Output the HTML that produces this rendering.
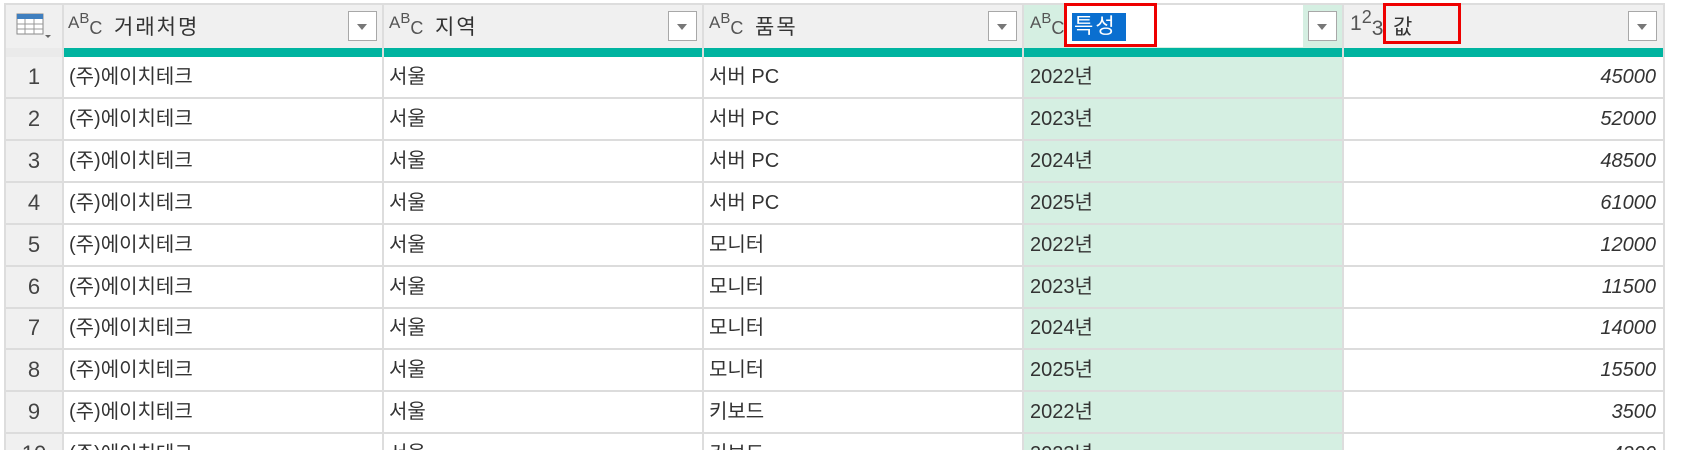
<!DOCTYPE html>
<html><head><meta charset="utf-8"><style>
html,body{margin:0;width:1684px;height:450px;overflow:hidden}
body{background:#fff;font-family:"Liberation Sans","Noto Sans CJK KR",sans-serif;color:#333}
#w{position:relative;width:1684px;height:450px;overflow:hidden}
.a{position:absolute}
.hdr{top:5px;height:43px;background:#f0f0f0}
.dd{position:absolute;top:11px;width:29px;height:30px;border:1.5px solid #a8a8a8;background:#fff;box-sizing:border-box}
.dd:after{content:"";position:absolute;left:8px;top:12px;border-left:5px solid transparent;border-right:5px solid transparent;border-top:6px solid #777}
.abc{position:absolute;top:12px;font-size:17px;color:#555;line-height:20px}
.abc sup{font-size:15px;position:relative;top:-5px;vertical-align:baseline}
.abc sub{font-size:18px;position:relative;top:6px;vertical-align:baseline}
.ht{position:absolute;top:11px;font-size:21px;color:#333;letter-spacing:2px}
.cell{position:absolute;font-size:20px;height:40px;line-height:40px}
</style></head><body><div id="w">
<div class="a hdr" style="left:5px;width:1659px"></div>
<div class="a" style="left:5px;top:3px;width:1659px;height:2px;background:#ddd"></div>
<div class="a" style="left:1024px;top:5px;width:319px;height:43px;background:#d5efe2"></div>
<div class="a" style="left:1064px;top:5px;width:239px;height:42px;background:#fff"></div>
<div class="a" style="left:63px;top:48px;width:1601px;height:9px;background:#00b4a0"></div>
<div class="a" style="left:5px;top:48px;width:58px;height:9px;background:#eaeaea"></div>
<div class="a" style="left:5px;top:57px;width:58px;height:393px;background:#f0f0f0"></div>
<div class="a" style="left:1024px;top:57px;width:319px;height:393px;background:#d5efe2"></div>
<div id="rows"></div>
<div class="a" style="left:4px;top:3px;width:2px;height:447px;background:#ddd"></div>
<div class="a" style="left:62px;top:3px;width:2px;height:447px;background:#ddd"></div>
<div class="a" style="left:382px;top:3px;width:2px;height:447px;background:#ddd"></div>
<div class="a" style="left:702px;top:3px;width:2px;height:447px;background:#ddd"></div>
<div class="a" style="left:1022px;top:3px;width:2px;height:447px;background:#ddd"></div>
<div class="a" style="left:1342px;top:3px;width:2px;height:447px;background:#ddd"></div>
<div class="a" style="left:1663px;top:3px;width:2px;height:447px;background:#ddd"></div>
<svg class="a" style="left:16px;top:13px" width="40" height="28"><rect x="1" y="1" width="26" height="20" fill="#fff" stroke="#888"/><rect x="1" y="1" width="26" height="5" fill="#3f7fbf"/><path d="M1 11H27M1 16H27M9 6V21M18 6V21" stroke="#999"/><path d="M29 22l3 3 3-3z" fill="#666"/></svg>
<div class="abc" style="left:68px">A<sup>B</sup><sub>C</sub></div><div class="ht" style="left:114px">거래처명</div><div class="dd" style="left:348px"></div>
<div class="abc" style="left:389px">A<sup>B</sup><sub>C</sub></div><div class="ht" style="left:435px">지역</div><div class="dd" style="left:668px"></div>
<div class="abc" style="left:709px">A<sup>B</sup><sub>C</sub></div><div class="ht" style="left:755px">품목</div><div class="dd" style="left:988px"></div>
<div class="abc" style="left:1030px">A<sup>B</sup><sub>C</sub></div>
<div class="a" style="left:1072px;top:13px;width:54px;height:28px;background:#0a6fd0"></div>
<div class="ht" style="left:1074px;top:10px;color:#fff">특성</div>
<div class="dd" style="left:1308px"></div>
<div class="a" style="left:1064px;top:3px;width:93px;height:44px;border:3px solid #e00;box-sizing:border-box"></div>
<div class="a" style="left:1350px;top:12px;font-size:21px;color:#555">1<span style="position:relative;top:-7px;font-size:18px">2</span><span style="position:relative;top:5px">3</span></div>
<div class="ht" style="left:1393px">값</div>
<div class="a" style="left:1383px;top:3px;width:78px;height:41px;border:3px solid #e00;box-sizing:border-box"></div>
<div class="dd" style="left:1628px"></div>
</div>
<script>
var d=[["서버 PC","2022년",45000],["서버 PC","2023년",52000],["서버 PC","2024년",48500],["서버 PC","2025년",61000],["모니터","2022년",12000],["모니터","2023년",11500],["모니터","2024년",14000],["모니터","2025년",15500],["키보드","2022년",3500],["키보드","2023년",4200]];
var h="";
for(var i=0;i<10;i++){var t=57+i*41.9;
h+='<div class="a" style="left:5px;top:'+(t+40)+'px;width:1659px;height:2px;background:#dcdcdc"></div>';
h+='<div class="cell" style="left:5px;top:'+t+'px;width:58px;text-align:center;color:#444;font-size:22px">'+(i+1)+'</div>';
h+='<div class="cell" style="left:69px;top:'+t+'px">(주)에이치테크</div>';
h+='<div class="cell" style="left:389px;top:'+t+'px">서울</div>';
h+='<div class="cell" style="left:709px;top:'+t+'px">'+d[i][0]+'</div>';
h+='<div class="cell" style="left:1030px;top:'+t+'px">'+d[i][1]+'</div>';
h+='<div class="cell" style="left:1344px;width:312px;text-align:right;font-style:italic;top:'+t+'px">'+d[i][2]+'</div>';}
document.getElementById("rows").innerHTML=h;
</script>
</body></html>
